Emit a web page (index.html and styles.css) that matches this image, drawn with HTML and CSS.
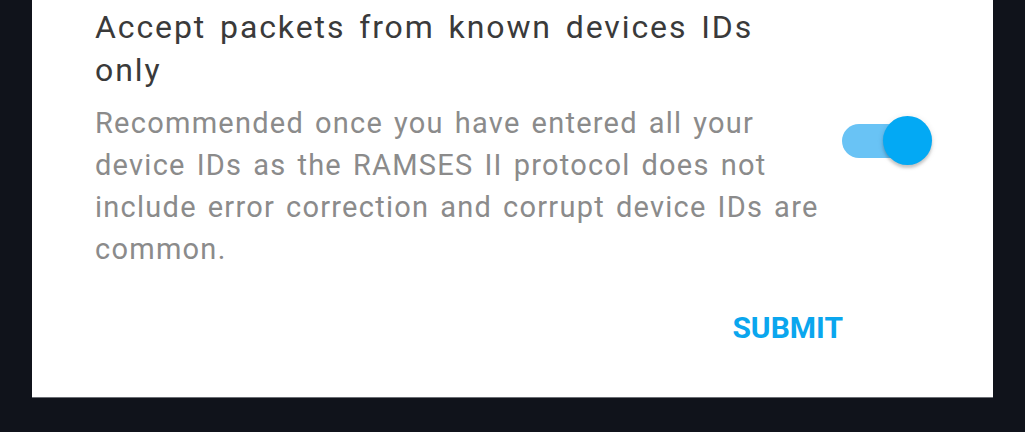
FILE: index.html
```html
<!DOCTYPE html>
<html lang="en">
<head>
    <meta charset="UTF-8">
    <meta name="viewport" content="width=device-width, initial-scale=1.0">
    <title>Options</title>
    <link rel="stylesheet" href="styles.css">
</head>
<body>
    <div class="card">
        <div class="setting-row">
            <div class="setting-text">
                <h2>Accept packets from known devices IDs only</h2>
                <p>Recommended once you have entered all your device IDs as the RAMSES II protocol does not include error correction and corrupt device IDs are common.</p>
            </div>
            <label class="switch">
                <input type="checkbox" checked>
                <span class="track"></span>
                <span class="thumb"></span>
            </label>
        </div>
        <div class="card-actions">
            <button class="submit-btn">Submit</button>
        </div>
    </div>
</body>
</html>
```

FILE: styles.css
```css
body {
    font-family: Roboto, 'Noto Sans', sans-serif;
    margin: 0;
    padding: 0;
    background-color: #10131b;
    height: 432px;
    overflow: hidden;
}
.card {
    margin: 0 32px;
    background-color: white;
    padding: 6px 61px 51px 63px;
    box-shadow: 0 1px 0 #6b6e74;
}
.setting-row {
    display: flex;
    align-items: center;
    gap: 6px;
}
.setting-text {
    flex: 1;
}
.setting-text h2 {
    margin: 0;
    max-width: 700px;
    font-size: 32px;
    font-weight: 400;
    line-height: 43px;
    letter-spacing: 1.9px;
    word-spacing: 4px;
    color: #3a3a3a;
}
.setting-text p {
    margin: 10px 0 0;
    font-size: 29px;
    line-height: 42px;
    letter-spacing: 1.25px;
    word-spacing: 2.5px;
    color: #8b8b8b;
}
.switch {
    position: relative;
    width: 90px;
    height: 50px;
    margin-top: 6px;
    flex-shrink: 0;
}
.switch input {
    display: none;
}
.track {
    position: absolute;
    left: 0;
    top: 8px;
    width: 83px;
    height: 34px;
    border-radius: 17px;
    background-color: #69c3f5;
}
.thumb {
    position: absolute;
    right: 0;
    top: 0;
    width: 49px;
    height: 49px;
    border-radius: 50%;
    background-color: #03a9f4;
    box-shadow: 0 3px 3px rgba(0, 0, 0, 0.18), 0 1px 6px rgba(0, 0, 0, 0.1);
}
.card-actions {
    display: flex;
    justify-content: flex-end;
    margin-top: 40px;
    padding-right: 89px;
}
.submit-btn {
    padding: 0;
    border: none;
    background: none;
    font-family: Roboto, sans-serif;
    font-size: 30px;
    font-weight: 700;
    line-height: 36px;
    text-transform: uppercase;
    color: #0aa6ee;
    cursor: pointer;
}
```
